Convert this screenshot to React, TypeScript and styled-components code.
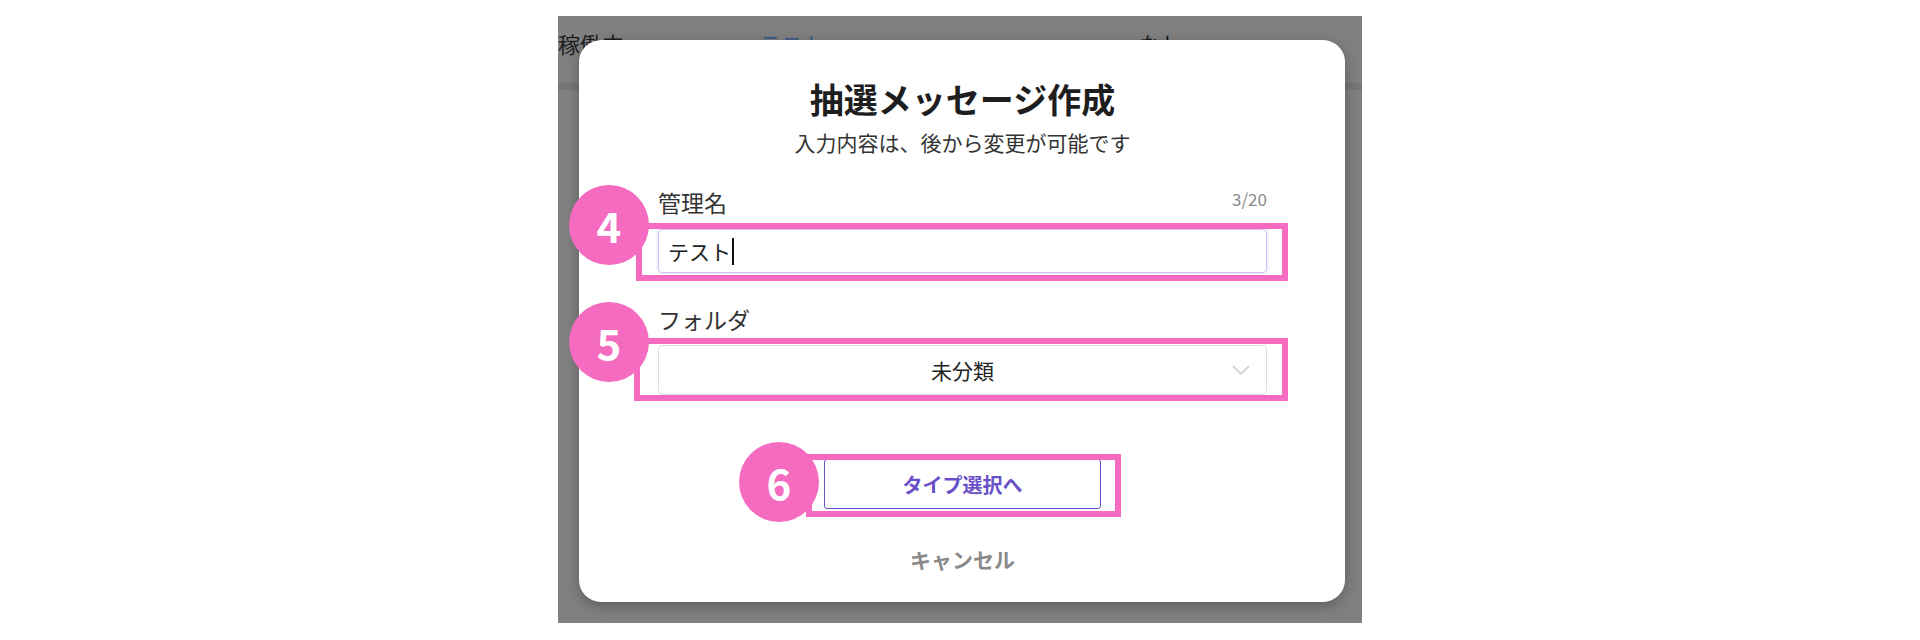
import React from "react";
import styled, { createGlobalStyle } from "styled-components";

const GlobalStyle = createGlobalStyle`
  html, body { margin: 0; padding: 0; background: #ffffff; }
  body { font-family: "Noto Sans CJK JP", "Noto Sans", sans-serif; }
`;

const PINK = "#f46bbf";

const Page = styled.div`
  width: 1920px;
  height: 640px;
  display: flex;
  flex-direction: column;
  align-items: center;
  padding-top: 16px;
  box-sizing: border-box;
`;

const Shot = styled.div`
  position: relative;
  width: 804px;
  height: 607px;
  background: #808080;
  overflow: hidden;
`;

const BackRow = styled.div`
  display: flex;
  height: 67px;
  padding-top: 12px;
  box-sizing: border-box;
  font-size: 22px;
  line-height: 30px;
  color: #1c1c1c;
`;

const BackCell = styled.div<{ $w: number; $color?: string }>`
  width: ${(p) => p.$w}px;
  color: ${(p) => p.$color || "#1c1c1c"};
  white-space: nowrap;
`;

const BackBand = styled.div`
  height: 7px;
  background: #767676;
`;

const Modal = styled.div`
  position: absolute;
  left: 21px;
  top: 24px;
  width: 766px;
  height: 562px;
  background: #ffffff;
  border-radius: 22px;
  box-shadow: 0 4px 14px rgba(0, 0, 0, 0.28);
  display: flex;
  flex-direction: column;
  align-items: center;
  padding: 36px 78px 0 79px;
  box-sizing: border-box;
`;

const Title = styled.h2`
  margin: 0;
  font-size: 34px;
  line-height: 46px;
  font-weight: 700;
  color: #1e1e1e;
`;

const Subtitle = styled.p`
  margin: 5px 0 0;
  font-size: 21px;
  line-height: 30px;
  color: #333;
`;

const Field = styled.div<{ $mt: number }>`
  align-self: stretch;
  margin-top: ${(p) => p.$mt}px;
  display: flex;
  flex-direction: column;
`;

const LabelRow = styled.div`
  display: flex;
  justify-content: space-between;
  align-items: center;
  height: 32px;
`;

const Label = styled.span`
  font-size: 23px;
  color: #333;
`;

const Counter = styled.span`
  font-size: 17px;
  color: #8a8a8a;
  margin-top: -8px;
`;

const Annotated = styled.div<{ $mt: number }>`
  position: relative;
  margin-top: ${(p) => p.$mt}px;
`;

const Frame = styled.div<{ $t: number; $r: number; $b: number; $l: number }>`
  position: absolute;
  top: -${(p) => p.$t}px;
  right: -${(p) => p.$r}px;
  bottom: -${(p) => p.$b}px;
  left: -${(p) => p.$l}px;
  border: 6px solid ${PINK};
  pointer-events: none;
`;

const Badge = styled.div<{ $x: number; $y: number }>`
  position: absolute;
  left: ${(p) => p.$x}px;
  top: ${(p) => p.$y}px;
  width: 80px;
  height: 80px;
  border-radius: 50%;
  background: ${PINK};
  color: #fff;
  font-size: 42px;
  font-weight: 700;
  display: flex;
  align-items: center;
  justify-content: center;
  line-height: 1;
`;

const TextInput = styled.div`
  height: 44px;
  box-sizing: border-box;
  border: 1px solid #cdc2f3;
  border-radius: 4px;
  box-shadow: 0 0 3px rgba(140, 110, 230, 0.35);
  display: flex;
  align-items: center;
  padding-left: 9px;
  font-size: 21px;
  color: #222;
`;

const Caret = styled.span`
  display: inline-block;
  width: 2px;
  height: 27px;
  background: #111;
  margin-left: 1px;
`;

const Select = styled.div`
  position: relative;
  height: 50px;
  box-sizing: border-box;
  border: 1px solid #dedede;
  border-radius: 4px;
  display: flex;
  align-items: center;
  justify-content: center;
  font-size: 21px;
  color: #222;
`;

const Chevron = styled.svg`
  position: absolute;
  right: 16px;
  top: 19px;
`;

const PrimaryButton = styled.button`
  width: 277px;
  height: 50px;
  background: #fff;
  border: 1px solid #6a50c8;
  border-radius: 3px;
  font-family: inherit;
  font-size: 20px;
  font-weight: 700;
  color: #6a50c8;
  cursor: pointer;
  display: block;
`;

const CancelButton = styled.button`
  margin-top: 35px;
  background: none;
  border: none;
  padding: 0;
  font-family: inherit;
  font-size: 21px;
  line-height: 30px;
  font-weight: 700;
  color: #8a8a8a;
  cursor: pointer;
`;

export default function App() {
  return (
    <>
      <GlobalStyle />
      <Page>
        <Shot>
          <BackRow>
            <BackCell $w={201}>稼働中</BackCell>
            <BackCell $w={380} $color="#3a5a8c">テスト</BackCell>
            <BackCell $w={100}>なし</BackCell>
          </BackRow>
          <BackBand />
          <Modal>
            <Title>抽選メッセージ作成</Title>
            <Subtitle>入力内容は、後から変更が可能です</Subtitle>

            <Field $mt={29}>
              <LabelRow>
                <Label>管理名</Label>
                <Counter>3/20</Counter>
              </LabelRow>
              <Annotated $mt={11}>
                <TextInput>
                  テスト
                  <Caret />
                </TextInput>
                <Frame $t={6} $r={21} $b={8} $l={22} />
                <Badge $x={-89} $y={-44}>4</Badge>
              </Annotated>
            </Field>

            <Field $mt={30}>
              <LabelRow>
                <Label>フォルダ</Label>
              </LabelRow>
              <Annotated $mt={10}>
                <Select>
                  未分類
                  <Chevron width="18" height="10" viewBox="0 0 18 10">
                    <path d="M1 1 L9 9 L17 1" fill="none" stroke="#d4d4d4" strokeWidth="1.8" />
                  </Chevron>
                </Select>
                <Frame $t={7} $r={21} $b={6} $l={24} />
                <Badge $x={-89} $y={-43}>5</Badge>
              </Annotated>
            </Field>

            <Annotated $mt={64}>
              <PrimaryButton>タイプ選択へ</PrimaryButton>
              <Frame $t={5} $r={20} $b={8} $l={18} />
              <Badge $x={-85} $y={-17}>6</Badge>
            </Annotated>

            <CancelButton>キャンセル</CancelButton>
          </Modal>
        </Shot>
      </Page>
    </>
  );
}
